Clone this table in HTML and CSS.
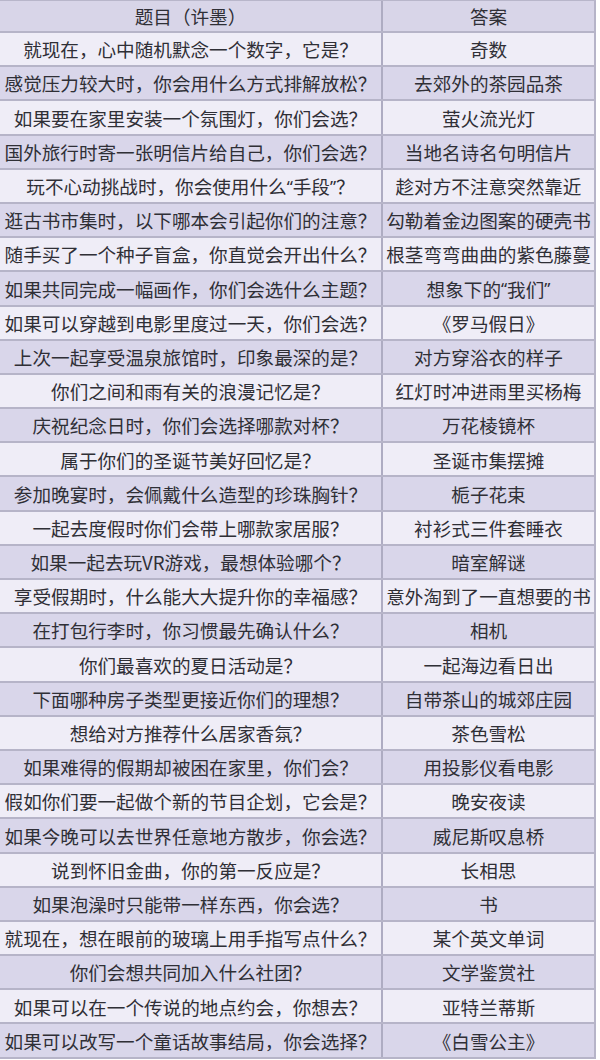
FILE: index.html
```html
<!DOCTYPE html>
<html lang="zh-CN">
<head>
<meta charset="utf-8">
<title>题目（许墨）</title>
<link rel="stylesheet" href="styles.css">
</head>
<body>
<div class="table">
  <div class="row head"><div class="cell q">题目（许墨）</div><div class="cell a">答案</div></div>
  <div class="row light"><div class="cell q">就现在，心中随机默念一个数字，它是？</div><div class="cell a">奇数</div></div>
  <div class="row dark"><div class="cell q">感觉压力较大时，你会用什么方式排解放松？</div><div class="cell a">去郊外的茶园品茶</div></div>
  <div class="row light"><div class="cell q">如果要在家里安装一个氛围灯，你们会选？</div><div class="cell a">萤火流光灯</div></div>
  <div class="row dark"><div class="cell q">国外旅行时寄一张明信片给自己，你们会选？</div><div class="cell a">当地名诗名句明信片</div></div>
  <div class="row light"><div class="cell q">玩不心动挑战时，你会使用什么<span class="qt">“</span>手段<span class="qt">”</span>？</div><div class="cell a">趁对方不注意突然靠近</div></div>
  <div class="row dark"><div class="cell q">逛古书市集时，以下哪本会引起你们的注意？</div><div class="cell a">勾勒着金边图案的硬壳书</div></div>
  <div class="row light"><div class="cell q">随手买了一个种子盲盒，你直觉会开出什么？</div><div class="cell a">根茎弯弯曲曲的紫色藤蔓</div></div>
  <div class="row dark"><div class="cell q">如果共同完成一幅画作，你们会选什么主题？</div><div class="cell a">想象下的<span class="qt">“</span>我们<span class="qt">”</span></div></div>
  <div class="row light"><div class="cell q">如果可以穿越到电影里度过一天，你们会选？</div><div class="cell a">《罗马假日》</div></div>
  <div class="row dark"><div class="cell q">上次一起享受温泉旅馆时，印象最深的是？</div><div class="cell a">对方穿浴衣的样子</div></div>
  <div class="row light"><div class="cell q">你们之间和雨有关的浪漫记忆是？</div><div class="cell a">红灯时冲进雨里买杨梅</div></div>
  <div class="row dark"><div class="cell q">庆祝纪念日时，你们会选择哪款对杯？</div><div class="cell a">万花棱镜杯</div></div>
  <div class="row light"><div class="cell q">属于你们的圣诞节美好回忆是？</div><div class="cell a">圣诞市集摆摊</div></div>
  <div class="row dark"><div class="cell q">参加晚宴时，会佩戴什么造型的珍珠胸针？</div><div class="cell a">栀子花束</div></div>
  <div class="row light"><div class="cell q">一起去度假时你们会带上哪款家居服？</div><div class="cell a">衬衫式三件套睡衣</div></div>
  <div class="row dark"><div class="cell q">如果一起去玩VR游戏，最想体验哪个？</div><div class="cell a">暗室解谜</div></div>
  <div class="row light"><div class="cell q">享受假期时，什么能大大提升你的幸福感？</div><div class="cell a">意外淘到了一直想要的书</div></div>
  <div class="row dark"><div class="cell q">在打包行李时，你习惯最先确认什么？</div><div class="cell a">相机</div></div>
  <div class="row light"><div class="cell q">你们最喜欢的夏日活动是？</div><div class="cell a">一起海边看日出</div></div>
  <div class="row dark"><div class="cell q">下面哪种房子类型更接近你们的理想？</div><div class="cell a">自带茶山的城郊庄园</div></div>
  <div class="row light"><div class="cell q">想给对方推荐什么居家香氛？</div><div class="cell a">茶色雪松</div></div>
  <div class="row dark"><div class="cell q">如果难得的假期却被困在家里，你们会？</div><div class="cell a">用投影仪看电影</div></div>
  <div class="row light"><div class="cell q">假如你们要一起做个新的节目企划，它会是？</div><div class="cell a">晚安夜读</div></div>
  <div class="row dark"><div class="cell q">如果今晚可以去世界任意地方散步，你会选？</div><div class="cell a">威尼斯叹息桥</div></div>
  <div class="row light"><div class="cell q">说到怀旧金曲，你的第一反应是？</div><div class="cell a">长相思</div></div>
  <div class="row dark"><div class="cell q">如果泡澡时只能带一样东西，你会选？</div><div class="cell a">书</div></div>
  <div class="row light"><div class="cell q">就现在，想在眼前的玻璃上用手指写点什么？</div><div class="cell a">某个英文单词</div></div>
  <div class="row dark"><div class="cell q">你们会想共同加入什么社团？</div><div class="cell a">文学鉴赏社</div></div>
  <div class="row light"><div class="cell q">如果可以在一个传说的地点约会，你想去？</div><div class="cell a">亚特兰蒂斯</div></div>
  <div class="row dark"><div class="cell q">如果可以改写一个童话故事结局，你会选择？</div><div class="cell a">《白雪公主》</div></div>
</div>
</body>
</html>
```

FILE: styles.css
```css
html, body {
  margin: 0;
  padding: 0;
  background: #ffffff;
}

body {
  width: 600px;
  height: 1060px;
  overflow: hidden;
  font-family: "Noto Sans CJK SC", "Noto Sans", sans-serif;
  color: #2f2f36;
}

.table {
  width: 596px;
  display: flex;
  flex-direction: column;
  border-top: 1px solid #b8b6ca;
}

.row {
  display: flex;
  height: 34.2px;
  box-sizing: border-box;
  border-bottom: 2px solid #b6b4c8;
}

.row.head {
  height: 32px;
  background: #d8d5e8;
}

.row.light {
  background: #efedf7;
}

.row.dark {
  background: #d9d6ea;
}

.cell {
  display: flex;
  align-items: center;
  justify-content: center;
  box-sizing: border-box;
  font-size: 18.6px;
  line-height: 1;
  white-space: nowrap;
  padding-top: 1px;
}

.cell.q {
  width: 383px;
  border-right: 2px solid #aeacc2;
}

.cell.a {
  width: 213px;
  border-right: 2px solid #b6b4c8;
}

.qt {
  font-family: "Noto Sans", "DejaVu Sans", sans-serif;
  font-size: 17px;
}
```
